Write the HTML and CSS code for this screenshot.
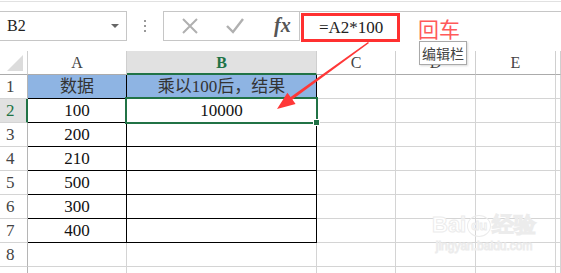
FILE: index.html
```html
<!DOCTYPE html>
<html>
<head>
    <title>公式示例</title>
    <link rel="stylesheet" href="styles.css">
</head>
<body>
    <div class="page">
        <div class="topline"></div>

        <div class="fbar">
            <div class="namebox">
                <span>B2</span>
                <span class="drop"></span>
            </div>
            <div class="dots"><i></i><i></i><i></i></div>
            <div class="fbtns">
                <svg class="ico" width="18" height="18" viewBox="0 0 18 18">
                    <path d="M2 2 L16 16 M16 2 L2 16" stroke="#b0b0b0" stroke-width="2" fill="none"/>
                </svg>
                <svg class="ico" width="20" height="18" viewBox="0 0 20 18">
                    <path d="M2 9 L8 15 L18 2" stroke="#b0b0b0" stroke-width="2.4" fill="none"/>
                </svg>
                <span class="fx">fx</span>
            </div>
            <div class="finput">
                <div class="redbox">=A2*100</div>
                <span class="enter">回车</span>
            </div>
        </div>

        <div class="tip">编辑栏</div>

        <div class="sheet">
            <!-- header row -->
            <div class="c hd corner"><span class="tri"></span></div>
            <div class="c hd">A</div>
            <div class="c hd sel">B</div>
            <div class="c hd">C</div>
            <div class="c hd">D</div>
            <div class="c hd">E</div>
            <div class="c hd"></div>

            <div class="c rh">1</div>
            <div class="c t blue">数据</div>
            <div class="c t blue">乘以100后，结果</div>
            <div class="c"></div><div class="c"></div><div class="c"></div><div class="c"></div>

            <div class="c rh rsel">2</div>
            <div class="c t">100</div>
            <div class="c t active">10000<span class="handle"></span></div>
            <div class="c"></div><div class="c"></div><div class="c"></div><div class="c"></div>

            <div class="c rh">3</div>
            <div class="c t">200</div>
            <div class="c t"></div>
            <div class="c"></div><div class="c"></div><div class="c"></div><div class="c"></div>

            <div class="c rh">4</div>
            <div class="c t">210</div>
            <div class="c t"></div>
            <div class="c"></div><div class="c"></div><div class="c"></div><div class="c"></div>

            <div class="c rh">5</div>
            <div class="c t">500</div>
            <div class="c t"></div>
            <div class="c"></div><div class="c"></div><div class="c"></div><div class="c"></div>

            <div class="c rh">6</div>
            <div class="c t">300</div>
            <div class="c t"></div>
            <div class="c"></div><div class="c"></div><div class="c"></div><div class="c"></div>

            <div class="c rh">7</div>
            <div class="c t">400</div>
            <div class="c t"></div>
            <div class="c"></div><div class="c"></div><div class="c"></div><div class="c"></div>

            <div class="c rh">8</div>
            <div class="c"></div><div class="c"></div><div class="c"></div><div class="c"></div><div class="c"></div><div class="c"></div>

            <div class="c rh"></div>
            <div class="c"></div><div class="c"></div><div class="c"></div><div class="c"></div><div class="c"></div><div class="c"></div>
        </div>

        <div class="mark">
            <div class="mark-top">Bai<span class="paw">du</span>经验</div>
            <div class="mark-url">jingyan.baidu.com</div>
        </div>

        <svg class="arrow" width="561" height="273" viewBox="0 0 561 273">
            <polygon points="368,42 369,43 292.4,99.5 295.6,103.9 277,109 287.4,92.7 290.6,97.1" fill="#ff3838"/>
        </svg>
    </div>
</body>
</html>
```

FILE: styles.css
```css
body {
    margin: 0;
    background: #fff;
    font-family: "Liberation Serif", "DejaVu Serif", "Noto Sans CJK SC", serif;
    overflow: hidden;
}
.page {
    position: relative;
    width: 561px;
    height: 273px;
    overflow: hidden;
}
.topline {
    margin-top: 1px;
    height: 1px;
    background: #e1e1e1;
}

/* formula bar */
.fbar {
    display: flex;
    align-items: center;
    margin-top: 9px;
    height: 30px;
}
.namebox {
    box-sizing: border-box;
    width: 128px;
    height: 30px;
    margin-left: -1px;
    border: 1px solid #c6c6c6;
    display: flex;
    align-items: center;
    justify-content: space-between;
    padding: 0 7px 0 7px;
    font-size: 16px;
    color: #222;
}
.drop {
    width: 0;
    height: 0;
    border-left: 4px solid transparent;
    border-right: 4px solid transparent;
    border-top: 4px solid #666;
}
.dots {
    display: flex;
    flex-direction: column;
    gap: 3px;
    margin-left: 17px;
}
.dots i {
    display: block;
    width: 2px;
    height: 2px;
    background: #999;
}
.fbtns {
    box-sizing: border-box;
    width: 137px;
    height: 30px;
    margin-left: 17px;
    border: 1px solid #c6c6c6;
    display: flex;
    align-items: center;
    padding-left: 17px;
    gap: 26px;
}
.fx {
    font-family: "Liberation Serif", "DejaVu Serif", serif;
    font-style: italic;
    font-weight: bold;
    font-size: 20px;
    color: #555;
    margin-left: 3px;
    margin-top: -2px;
}
.finput {
    flex: 1;
    display: flex;
    align-items: center;
    height: 30px;
    box-sizing: border-box;
    border-top: 1px solid #c6c6c6;
}
.redbox {
    box-sizing: border-box;
    width: 99px;
    height: 29px;
    margin-left: 1px;
    margin-top: 1px;
    border: 3px solid #ff3030;
    padding-left: 15px;
    font-size: 17px;
    line-height: 23px;
    color: #222;
}
.enter {
    margin-left: 18px;
    margin-top: 2px;
    font-family: "Noto Sans CJK SC", sans-serif;
    font-size: 21px;
    color: #ff5a5a;
}
.tip {
    position: absolute;
    left: 419px;
    top: 41px;
    box-sizing: border-box;
    width: 48px;
    height: 24px;
    border: 1px solid #a9a9a9;
    background: #fff;
    box-shadow: 1px 1px 2px rgba(0,0,0,0.15);
    font-family: "Noto Sans CJK SC", sans-serif;
    font-size: 14px;
    line-height: 22px;
    text-align: center;
    color: #444;
    z-index: 2;
}

/* sheet */
.sheet {
    margin-top: 10px;
    display: grid;
    grid-template-columns: 28px 99px 190px 79px 80px 80px 1fr;
    grid-auto-rows: 24px;
}
.c {
    box-sizing: border-box;
    border-right: 1px solid #d4d4d4;
    border-bottom: 1px solid #d4d4d4;
    font-size: 17px;
    line-height: 24px;
    text-align: center;
    color: #111;
    white-space: nowrap;
}
.hd {
    border-right-color: #cfcfcf;
    border-bottom-color: #ababab;
    color: #444;
    font-size: 16px;
}
.corner {
    position: relative;
}
.tri {
    position: absolute;
    right: 4px;
    bottom: 3px;
    width: 0;
    height: 0;
    border-left: 16px solid transparent;
    border-bottom: 16px solid #dcdcdc;
}
.hd.sel {
    background: #e1e1e1;
    border-bottom: 2px solid #217346;
    color: #217346;
    font-weight: bold;
}
.rh {
    border-right-color: #b5b5b5;
    color: #444;
    text-align: left;
    padding-left: 6px;
}
.rh.rsel {
    background: #e1e1e1;
    border-right: 2px solid #217346;
    color: #217346;
}
.t {
    border-right-color: #000;
    border-bottom-color: #000;
}
.blue {
    background: #8eb4e3;
    color: #333;
}
.active {
    position: relative;
}
.active::after {
    content: "";
    position: absolute;
    left: -2px;
    top: -2px;
    right: -2px;
    bottom: -2px;
    border: 2px solid #217346;
}
.handle {
    position: absolute;
    right: -4px;
    bottom: -4px;
    width: 5px;
    height: 5px;
    background: #217346;
    border: 1px solid #fff;
    z-index: 1;
}

/* watermark */
.mark {
    position: absolute;
    left: 432px;
    top: 212px;
    text-align: center;
    font-family: "Liberation Sans", sans-serif;
    color: #fff;
    -webkit-text-stroke: 1px #ececec;
}
.mark-top {
    font-size: 22px;
    font-weight: bold;
    line-height: 26px;
}
.paw {
    display: inline-block;
    font-size: 13px;
    width: 22px;
    height: 20px;
    line-height: 20px;
    border: 1px solid #ececec;
    border-radius: 50%;
    margin: 0 1px;
    vertical-align: 2px;
}
.mark-url {
    font-size: 12px;
    line-height: 16px;
}

.arrow {
    position: absolute;
    left: 0;
    top: 0;
    z-index: 3;
}
```
